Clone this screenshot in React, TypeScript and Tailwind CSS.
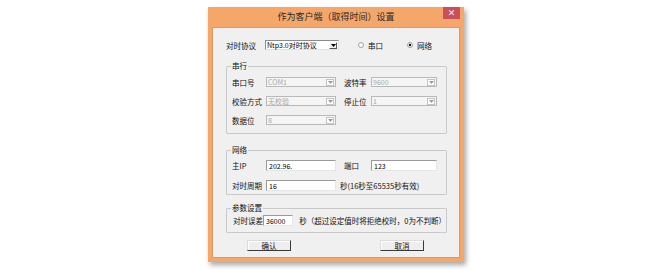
const font = "font-['Noto_Sans_CJK_SC','Noto_Sans',sans-serif]";

function Arrow({ color }: { color: string }) {
    return (
        <svg width="5" height="3" viewBox="0 0 5 3">
            <path d="M0 0 L5 0 L2.5 3 Z" fill={color} />
        </svg>
    );
}

function Combo({ value, width, disabled }: { value: string; width: string; disabled?: boolean }) {
    return (
        <div
            className={`${width} h-[10px] flex items-center border ${
                disabled
                    ? "bg-[#f5f5f5] border-[#b9b9b9] text-[#a8a8a8]"
                    : "bg-white border-t-[#8a8a8a] border-l-[#8a8a8a] border-b-[#e2e2e2] border-r-[#e2e2e2] text-black"
            }`}
        >
            <div className="flex-1 pl-[1px] text-[7px] leading-[8px] whitespace-nowrap">{value}</div>
            <div
                className={`w-[8px] h-[7px] mr-[1px] flex items-center justify-center border ${
                    disabled ? "bg-white border-[#c4c4c4]" : "bg-[#f0f0f0] border-t-white border-l-white border-b-[#555] border-r-[#555]"
                }`}
            >
                <Arrow color={disabled ? "#9a9a9a" : "#000"} />
            </div>
        </div>
    );
}

function Field({ value, width }: { value: string; width: string }) {
    return (
        <div className={`${width} h-[11px] flex items-center bg-white border border-t-[#9a9a9a] border-l-[#9a9a9a] border-b-[#e6e6e6] border-r-[#e6e6e6]`}>
            <span className="pl-[2px] text-[7px] leading-[8px] text-black">{value}</span>
        </div>
    );
}

function Radio({ label, checked }: { label: string; checked?: boolean }) {
    return (
        <div className="flex items-center gap-[4px]">
            <svg width="6" height="6" viewBox="0 0 6 6">
                <circle cx="3" cy="3" r="2.5" fill="#fff" stroke="#8c8c8c" strokeWidth="0.8" />
                {checked && <circle cx="3" cy="3" r="1.2" fill="#111" />}
            </svg>
            <span>{label}</span>
        </div>
    );
}

function Group({ title, className, children }: { title: string; className: string; children: React.ReactNode }) {
    return (
        <div className={`relative w-[221px] border border-[#c9c9c9] rounded-[1px] flex flex-col ${className}`}>
            <span className="absolute -top-[6px] left-[4px] px-[1px] bg-[#f0f0f0] leading-[10px]">{title}</span>
            {children}
        </div>
    );
}

function Btn({ label }: { label: string }) {
    return (
        <div className="w-[44px] h-[11px] flex items-center justify-center bg-[#eeeeee] border border-t-[#dcdcdc] border-l-[#dcdcdc] border-b-[#3a3a3a] border-r-[#3a3a3a] shadow-[inset_1px_1px_0_#fff]">
            {label}
        </div>
    );
}

export default function App() {
    return (
        <div className={`w-[672px] h-[270px] bg-white flex justify-center pt-[7px] ${font}`}>
            <div className="w-[256px] h-[255px] bg-[#f5a76a] flex flex-col shadow-[2px_3px_5px_rgba(0,0,0,0.35)]">
                <div className="relative h-[20px] flex items-center justify-center text-[9px] text-[#2a2a2a]">
                    作为客户端（取得时间）设置
                    <div className="absolute right-[4px] top-0 w-[17px] h-[12px] bg-[#c9505a] flex items-center justify-center text-white text-[8px] font-bold leading-none">
                        ×
                    </div>
                </div>
                <div className="flex-1 mx-[4px] mb-[4px] bg-[#f0f0f0] border border-[#d99a68] flex flex-col pl-[13px] text-[7.5px] text-[#111] leading-[9px]">
                    <div className="mt-[12px] h-[10px] flex items-center">
                        <span className="w-[39px]">对时协议</span>
                        <Combo value="Ntp3.0对时协议" width="w-[74px]" />
                        <div className="ml-[19px]">
                            <Radio label="串口" />
                        </div>
                        <div className="ml-[24px]">
                            <Radio label="网络" checked />
                        </div>
                    </div>

                    <Group title="串行" className="mt-[16px] h-[68px] pt-[10px] pl-[5px] gap-[9px]">
                        <div className="flex items-center h-[10px]">
                            <span className="w-[34px]">串口号</span>
                            <Combo value="COM1" width="w-[70px]" disabled />
                            <span className="ml-[8px] w-[27px]">波特率</span>
                            <Combo value="9600" width="w-[66px]" disabled />
                        </div>
                        <div className="flex items-center h-[10px]">
                            <span className="w-[34px]">校验方式</span>
                            <Combo value="无校验" width="w-[70px]" disabled />
                            <span className="ml-[8px] w-[27px]">停止位</span>
                            <Combo value="1" width="w-[66px]" disabled />
                        </div>
                        <div className="flex items-center h-[10px]">
                            <span className="w-[34px]">数据位</span>
                            <Combo value="8" width="w-[70px]" disabled />
                        </div>
                    </Group>

                    <Group title="网络" className="mt-[16px] h-[45px] pt-[9px] pl-[5px] gap-[9px]">
                        <div className="flex items-center h-[11px]">
                            <span className="w-[34px]">主IP</span>
                            <Field value="202.96." width="w-[70px]" />
                            <span className="ml-[8px] w-[27px]">端口</span>
                            <Field value="123" width="w-[66px]" />
                        </div>
                        <div className="flex items-center h-[11px]">
                            <span className="w-[34px]">对时周期</span>
                            <Field value="16" width="w-[70px]" />
                            <span className="ml-[4px]">秒(16秒至65535秒有效)</span>
                        </div>
                    </Group>

                    <Group title="参数设置" className="mt-[13px] h-[25px] pt-[6px] pl-[6px]">
                        <div className="flex items-center h-[11px]">
                            <span className="w-[30px] whitespace-nowrap">对时误差</span>
                            <Field value="36000" width="w-[36px]" />
                            <span className="ml-[6px] whitespace-nowrap">秒（超过设定值时将拒绝校时，0为不判断）</span>
                        </div>
                    </Group>

                    <div className="mt-[7px] ml-[21px] flex gap-[89px]">
                        <Btn label="确认" />
                        <Btn label="取消" />
                    </div>
                </div>
            </div>
        </div>
    );
}
